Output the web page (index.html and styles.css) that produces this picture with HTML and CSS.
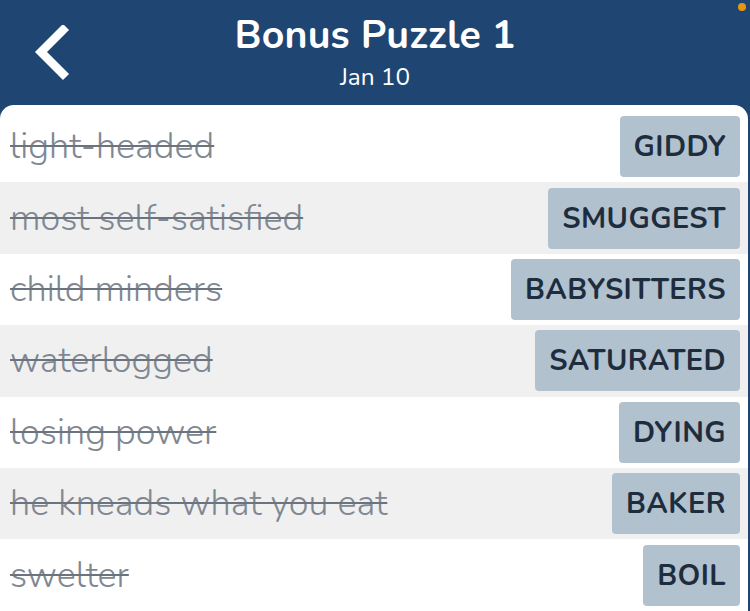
FILE: index.html
```html
<!DOCTYPE html>
<html>
<head>
<meta charset="utf-8">
<link rel="stylesheet" href="styles.css">
</head>
<body>
<div class="app">
  <header class="header">
    <button class="back" aria-label="Back">
      <svg width="40" height="56" viewBox="0 0 40 56"><path d="M30 5 L8 27 L30 49" fill="none" stroke="#fff" stroke-width="8.5" stroke-linecap="square" stroke-linejoin="miter"/></svg>
    </button>
    <div class="titles">
      <div class="title">Bonus Puzzle 1</div>
      <div class="subtitle">Jan 10</div>
    </div>
    <span class="dot"></span>
  </header>
  <main class="card">
    <div class="row"><span class="clue">light-headed</span><span class="answer">GIDDY</span></div>
    <div class="row alt"><span class="clue">most self-satisfied</span><span class="answer">SMUGGEST</span></div>
    <div class="row"><span class="clue">child minders</span><span class="answer">BABYSITTERS</span></div>
    <div class="row alt"><span class="clue">waterlogged</span><span class="answer">SATURATED</span></div>
    <div class="row"><span class="clue">losing power</span><span class="answer">DYING</span></div>
    <div class="row alt"><span class="clue">he kneads what you eat</span><span class="answer">BAKER</span></div>
    <div class="row"><span class="clue">swelter</span><span class="answer">BOIL</span></div>
  </main>
</div>
</body>
</html>
```

FILE: styles.css
```css
html, body {
  margin: 0;
  padding: 0;
  background: #1f4673;
  overflow: hidden;
}
.app {
  width: 750px;
  height: 611px;
  display: flex;
  flex-direction: column;
  font-family: "Nunito", "Lato", "Open Sans", sans-serif;
}
.header {
  position: relative;
  height: 105px;
  flex: none;
  display: flex;
  justify-content: center;
  background: #1f4673;
}
.back {
  position: absolute;
  left: 33px;
  top: 25px;
  border: 0;
  padding: 0;
  background: none;
}
.back svg { display: block; }
.titles {
  display: flex;
  flex-direction: column;
  align-items: center;
  padding-top: 12px;
  color: #fff;
}
.title {
  font-size: 39.3px;
  font-weight: 700;
  line-height: 46px;
  letter-spacing: 0.2px;
}
.subtitle {
  font-size: 24.4px;
  line-height: 30px;
  margin-top: 4px;
}
.dot {
  position: absolute;
  right: 4px;
  top: 3px;
  width: 8px;
  height: 8px;
  border-radius: 50%;
  background: #e8960f;
}
.card {
  flex: 1;
  margin-right: 2px;
  background: #fff;
  border-radius: 14px 14px 0 0;
  padding-top: 6px;
  display: flex;
  flex-direction: column;
}
.row {
  height: 71.4px;
  flex: none;
  display: flex;
  align-items: center;
  justify-content: space-between;
  padding: 0 8px 0 10px;
  box-sizing: border-box;
}
.row.alt { background: #f0f0f0; }
.clue {
  font-size: 36px;
  font-weight: 300;
  color: #7f8892;
  text-decoration: line-through;
  text-decoration-thickness: 2px;
  text-decoration-color: #6b747e;
}
.answer {
  height: 61px;
  display: flex;
  align-items: center;
  padding: 0 14px;
  background: #b2c1ce;
  border-radius: 4px;
  color: #1e2d3e;
  font-size: 29px;
  font-weight: 700;
  letter-spacing: 0.4px;
}
```
